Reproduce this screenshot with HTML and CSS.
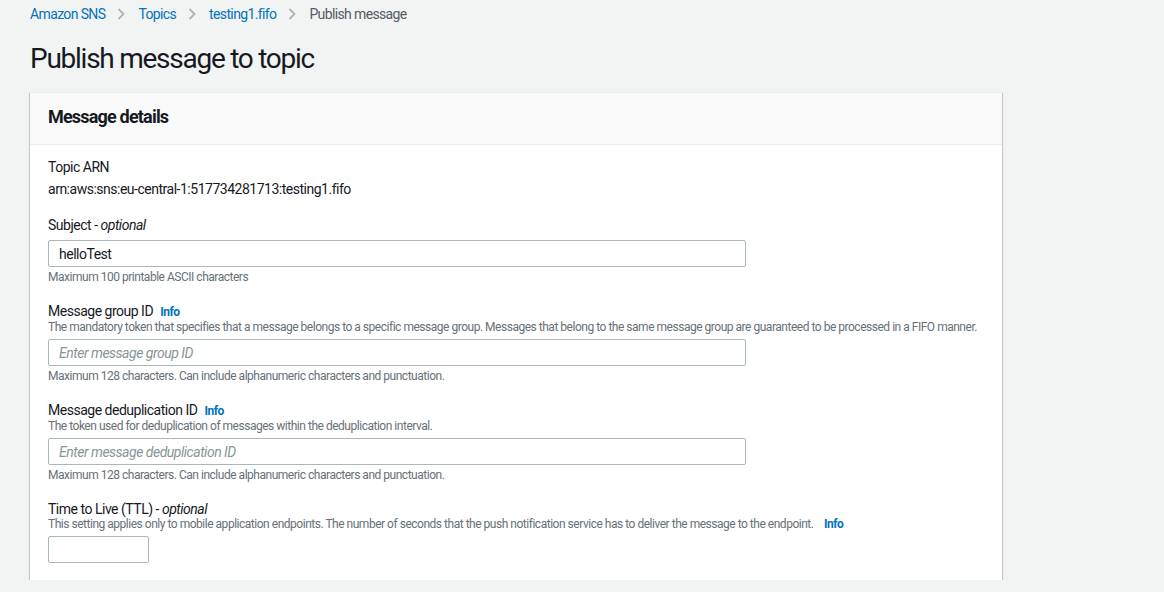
FILE: index.html
```html
<!DOCTYPE html>
<html lang="en">
<head>
<meta charset="utf-8">
<title>Publish message to topic</title>
<link rel="stylesheet" href="styles.css">
</head>
<body>
<div class="page">
  <nav class="crumbs">
    <a href="#">Amazon SNS</a>
    <svg class="sep" width="8" height="12" viewBox="0 0 8 12"><path d="M1.5 1l5 5-5 5" fill="none" stroke="#aab7b8" stroke-width="1.8"/></svg>
    <a href="#">Topics</a>
    <svg class="sep" width="8" height="12" viewBox="0 0 8 12"><path d="M1.5 1l5 5-5 5" fill="none" stroke="#aab7b8" stroke-width="1.8"/></svg>
    <a href="#">testing1.fifo</a>
    <svg class="sep" width="8" height="12" viewBox="0 0 8 12"><path d="M1.5 1l5 5-5 5" fill="none" stroke="#aab7b8" stroke-width="1.8"/></svg>
    <span class="current">Publish message</span>
  </nav>
  <h1 class="title">Publish message to topic</h1>
  <section class="card">
    <header class="card-head"><h2>Message details</h2></header>
    <div class="card-body">
      <div class="field first">
        <div class="label">Topic ARN</div>
        <div class="value">arn:aws:sns:eu-central-1:517734281713:testing1.fifo</div>
      </div>
      <div class="field">
        <div class="label">Subject - <i>optional</i></div>
        <input class="input" type="text" value="helloTest">
        <div class="hint">Maximum 100 printable ASCII characters</div>
      </div>
      <div class="field">
        <div class="label">Message group ID <a class="info" href="#">Info</a></div>
        <div class="desc">The mandatory token that specifies that a message belongs to a specific message group. Messages that belong to the same message group are guaranteed to be processed in a FIFO manner.</div>
        <input class="input" type="text" placeholder="Enter message group ID">
        <div class="hint">Maximum 128 characters. Can include alphanumeric characters and punctuation.</div>
      </div>
      <div class="field">
        <div class="label">Message deduplication ID <a class="info" href="#">Info</a></div>
        <div class="desc">The token used for deduplication of messages within the deduplication interval.</div>
        <input class="input" type="text" placeholder="Enter message deduplication ID">
        <div class="hint">Maximum 128 characters. Can include alphanumeric characters and punctuation.</div>
      </div>
      <div class="field">
        <div class="label">Time to Live (TTL) - <i>optional</i></div>
        <div class="desc">This setting applies only to mobile application endpoints. The number of seconds that the push notification service has to deliver the message to the endpoint. <a class="info" href="#">Info</a></div>
        <input class="input small" type="text">
      </div>
    </div>
  </section>
</div>
</body>
</html>
```
FILE: styles.css
```css
* { box-sizing: border-box; }
html, body { margin: 0; padding: 0; }
body {
  background: #f2f3f3;
  font-family: Roboto, "Liberation Sans", Arial, sans-serif;
  color: #16191f;
  font-size: 14px;
  line-height: 22px;
  letter-spacing: -0.035em;
}
.page { padding: 3px 162px 0 30px; }
.crumbs {
  display: flex;
  align-items: center;
  height: 22px;
  font-size: 14px;
  letter-spacing: -0.045em;
}
.crumbs a { color: #0073bb; text-decoration: none; }
.crumbs .sep { margin: 0 13px 0 12px; }
.crumbs .current { color: #545b64; }
.title {
  margin: 16px 0 0;
  font-size: 28px;
  line-height: 36px;
  font-weight: 400;
  letter-spacing: -0.045em;
  color: #16191f;
}
.card {
  margin-top: 15px;
  width: 972px;
  background: #fff;
  box-shadow: 0 1px 1px 0 rgba(0,28,36,.3), 1px 1px 1px 0 rgba(0,28,36,.15), -1px 1px 1px 0 rgba(0,28,36,.15);
  border-top: 1px solid #eaeded;
}
.card-head {
  background: #fafafa;
  border-bottom: 1px solid #eaeded;
  padding: 12px 18px 15px;
}
.card-head h2 {
  margin: 0;
  font-size: 18px;
  line-height: 24px;
  font-weight: 700;
  letter-spacing: -0.045em;
}
.card-body { padding: 12px 18px 17px; }
.field { margin-top: 16px; }
.field.first { margin-top: 0; }
.field.first + .field { margin-top: 15px; }
.label { font-size: 14px; line-height: 20px; }
.label i { font-style: italic; }
.value { font-size: 14px; line-height: 22px; margin-top: 1px; }
.desc { font-size: 12px; line-height: 16px; color: #687078; margin-top: -3px; margin-bottom: -1px; letter-spacing: -0.04em; }
.hint { font-size: 12px; line-height: 16px; color: #687078; margin-top: 2px; letter-spacing: -0.04em; }
.info {
  color: #0073bb;
  font-weight: 700;
  font-size: 12px;
  text-decoration: none;
  margin-left: 4px;
}
.desc .info { margin-left: 8px; }
.input {
  display: block;
  width: 698px;
  height: 27px;
  margin-top: 5px;
  border: 1px solid #aab7b8;
  border-radius: 2px;
  padding: 0 10px;
  font-family: inherit;
  font-size: 14px;
  letter-spacing: -0.035em;
  color: #16191f;
  background: #fff;
  outline: none;
}
.input::placeholder { color: #879596; font-style: italic; }
.input.small { width: 101px; }
```
